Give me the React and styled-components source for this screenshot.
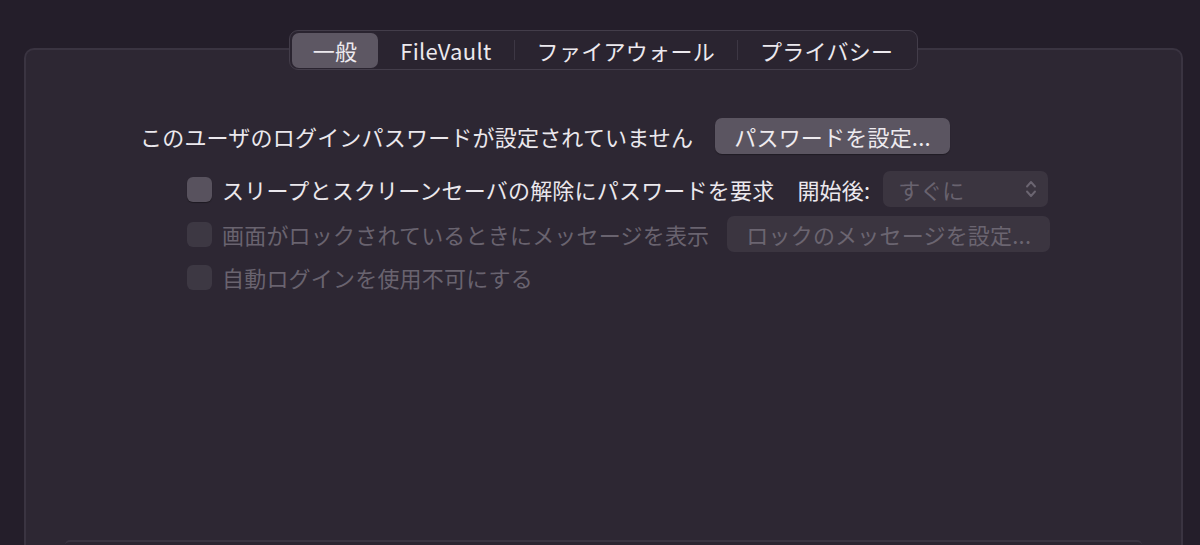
import React from "react";
import styled, { createGlobalStyle } from "styled-components";

const GlobalStyle = createGlobalStyle`
  html, body {
    margin: 0;
    padding: 0;
    background: #241e2a;
    overflow: hidden;
  }
  body {
    font-family: "Noto Sans CJK JP", "Noto Sans", sans-serif;
    color: #e8e5ea;
  }
`;

const Window = styled.div`
  width: 1200px;
  height: 545px;
  padding: 48px 17px 0 24px;
  box-sizing: border-box;
  background: #241e2a;
`;

const Panel = styled.div`
  display: flex;
  flex-direction: column;
  align-items: center;
  height: 497px;
  box-sizing: border-box;
  background: #2d2733;
  border: 2px solid #3a3441;
  border-bottom: none;
  border-radius: 10px 10px 0 0;
`;

const TabBar = styled.div`
  display: flex;
  align-items: center;
  margin-top: -20px;
  height: 40px;
  padding: 0 2px;
  box-sizing: border-box;
  background: #2a2430;
  border: 1px solid #433d4a;
  border-radius: 9px;
`;

const Tab = styled.div`
  display: flex;
  align-items: center;
  height: 35px;
  padding: 0 ${p => (p.$active ? 21 : 22)}px;
  font-size: 22px;
  font-weight: 400;
  letter-spacing: 0.3px;
  color: #ece9ee;
  border-radius: 7px;
  background: ${p => (p.$active ? "#5d5763" : "transparent")};
`;

const Sep = styled.div`
  width: 1px;
  height: 20px;
  background: #3d3744;
`;

const Content = styled.div`
  align-self: stretch;
  display: flex;
  flex-direction: column;
  padding: 42px 0 0 114px;
`;

const Row = styled.div`
  display: flex;
  align-items: center;
  height: ${p => p.$h || 40}px;
  margin-top: ${p => p.$mt || 0}px;
  padding-left: ${p => p.$indent || 0}px;
`;

const Label = styled.span`
  font-size: 22px;
  font-weight: 400;
  letter-spacing: 0.2px;
  white-space: nowrap;
  margin-left: ${p => p.$ml || 0}px;
  color: ${p => (p.$disabled ? "#69636f" : "#ebe8ed")};
`;

const Check = styled.div`
  width: 25px;
  height: 25px;
  box-sizing: border-box;
  border-radius: 6px;
  margin-right: 10px;
  flex: none;
  background: ${p => (p.$disabled ? "#3d3843" : "#58525e")};
  box-shadow: ${p => (p.$disabled ? "none" : "0 1px 1px rgba(0,0,0,0.35)")};
`;

const Button = styled.div`
  display: flex;
  align-items: center;
  height: 36px;
  padding: 0 19px;
  font-size: 22px;
  font-weight: 400;
  letter-spacing: 0.2px;
  white-space: nowrap;
  border-radius: 7px;
  box-sizing: border-box;
  margin-left: ${p => p.$ml || 0}px;
  color: ${p => (p.$disabled ? "#6b6571" : "#eeebef")};
  background: ${p => (p.$disabled ? "#3b3540" : "#5b5561")};
  box-shadow: ${p => (p.$disabled ? "none" : "0 1px 1px rgba(0,0,0,0.3)")};
`;

const Select = styled.div`
  display: flex;
  align-items: center;
  justify-content: space-between;
  width: 165px;
  height: 36px;
  margin-left: 13px;
  padding: 0 11px 0 15px;
  box-sizing: border-box;
  border-radius: 7px;
  background: #3b3540;
  font-size: 22px;
  font-weight: 400;
  color: #69636f;
`;

const BottomBox = styled.div`
  margin-top: auto;
  width: 1077px;
  height: 3px;
  border-top: 2px solid #3a3441;
  border-radius: 6px 6px 0 0;
  background: #2b2531;
`;

function Chevrons() {
  return (
    <svg width="12" height="22" viewBox="0 0 12 22" fill="none">
      <path d="M2 8.5 L6 4 L10 8.5" stroke="#6b6571" strokeWidth="1.9" strokeLinecap="round" strokeLinejoin="round" />
      <path d="M2 13.5 L6 18 L10 13.5" stroke="#6b6571" strokeWidth="1.9" strokeLinecap="round" strokeLinejoin="round" />
    </svg>
  );
}

export default function App() {
  return (
    <>
      <GlobalStyle />
      <Window>
        <Panel>
          <TabBar>
            <Tab $active>一般</Tab>
            <Tab>FileVault</Tab>
            <Sep />
            <Tab>ファイアウォール</Tab>
            <Sep />
            <Tab>プライバシー</Tab>
          </TabBar>
          <Content>
            <Row $h={48}>
              <Label>このユーザのログインパスワードが設定されていません</Label>
              <Button $ml={22}>パスワードを設定...</Button>
            </Row>
            <Row $h={44} $mt={7} $indent={47}>
              <Check />
              <Label>スリープとスクリーンセーバの解除にパスワードを要求</Label>
              <Label $ml={23}>開始後:</Label>
              <Select>
                すぐに
                <Chevrons />
              </Select>
            </Row>
            <Row $h={40} $mt={3} $indent={47}>
              <Check $disabled />
              <Label $disabled>画面がロックされているときにメッセージを表示</Label>
              <Button $disabled $ml={18}>ロックのメッセージを設定...</Button>
            </Row>
            <Row $h={40} $mt={3} $indent={47}>
              <Check $disabled />
              <Label $disabled>自動ログインを使用不可にする</Label>
            </Row>
          </Content>
          <BottomBox />
        </Panel>
      </Window>
    </>
  );
}
